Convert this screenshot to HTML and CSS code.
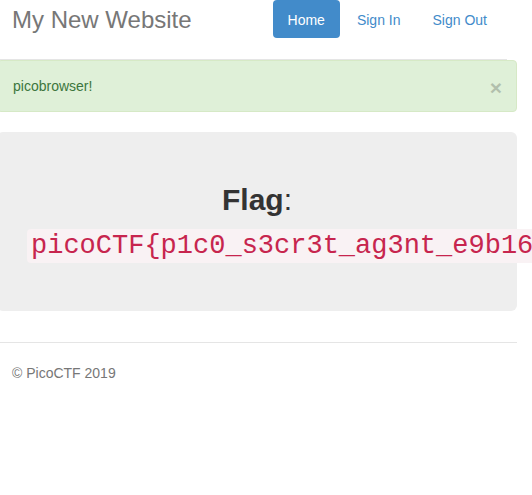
FILE: index.html
```html
<!DOCTYPE html>
<html lang="en">
<head>
<meta charset="utf-8">
<title>My New Website</title>
<link rel="stylesheet" href="styles.css">
</head>
<body>
<div class="container">
  <div class="header">
    <h3 class="brand">My New Website</h3>
    <ul class="nav">
      <li><a class="pill active" href="#">Home</a></li>
      <li><a class="pill" href="#">Sign In</a></li>
      <li><a class="pill" href="#">Sign Out</a></li>
    </ul>
  </div>
  <div class="alert">
    <span class="alert-text">picobrowser!</span>
    <span class="close">&times;</span>
  </div>
  <div class="jumbotron">
    <div class="flag"><b>Flag</b>: <code class="flag-code">picoCTF{p1c0_s3cr3t_ag3nt_e9b16</code></div>
  </div>
  <div class="footer">
    <p class="copy">&copy; PicoCTF 2019</p>
  </div>
</div>
</body>
</html>
```
FILE: styles.css
```css
html, body {
  margin: 0;
  padding: 0;
  overflow: hidden;
  background: #fff;
}
body {
  font-family: "Liberation Sans", Arial, sans-serif;
  font-size: 14px;
  line-height: 1.42857;
  color: #333;
}
.container {
  width: 520px;
  margin-left: -3px;
}
.header {
  width: 510px;
  box-sizing: border-box;
  height: 60px;
  padding: 0 5px 0 15px;
  border-bottom: 1px solid #e5e5e5;
  display: flex;
  justify-content: space-between;
  align-items: flex-start;
}
.brand {
  margin: 0;
  padding-top: 7px;
  font-size: 24px;
  line-height: 26.4px;
  font-weight: 500;
  color: #777;
}
.nav {
  list-style: none;
  margin: 0;
  padding: 0;
  display: flex;
  gap: 2px;
}
.pill {
  display: block;
  padding: 10px 15px 8px;
  line-height: 20px;
  border-radius: 4px;
  color: #428bca;
  text-decoration: none;
}
.pill.active {
  background: #428bca;
  color: #fff;
}
.alert {
  display: flex;
  justify-content: space-between;
  align-items: flex-start;
  padding: 15px 14px 15px 15px;
  margin-bottom: 20px;
  border: 1px solid #d6e9c6;
  border-radius: 4px;
  background: #dff0d8;
  color: #3c763d;
  line-height: 20px;
}
.close {
  font-size: 21px;
  font-weight: bold;
  line-height: 20px;
  margin: 2px 0 -2px;
  color: #000;
  opacity: 0.2;
}
.jumbotron {
  background: #eee;
  border-radius: 6px;
  padding: 47px 30px 46px;
  margin-bottom: 31px;
}
.flag {
  font-size: 30px;
  line-height: 1.42857;
  text-align: center;
  color: #333;
}
.flag-code {
  font-family: "Liberation Mono", "Courier New", monospace;
  font-size: 90%;
  padding: 2px 4px;
  color: #c7254e;
  background: #f9f2f4;
  border-radius: 4px;
  white-space: nowrap;
}
.footer {
  border-top: 1px solid #e5e5e5;
  padding: 20px 15px 0;
  color: #777;
}
.copy {
  margin: 0;
  line-height: 20px;
}
```
